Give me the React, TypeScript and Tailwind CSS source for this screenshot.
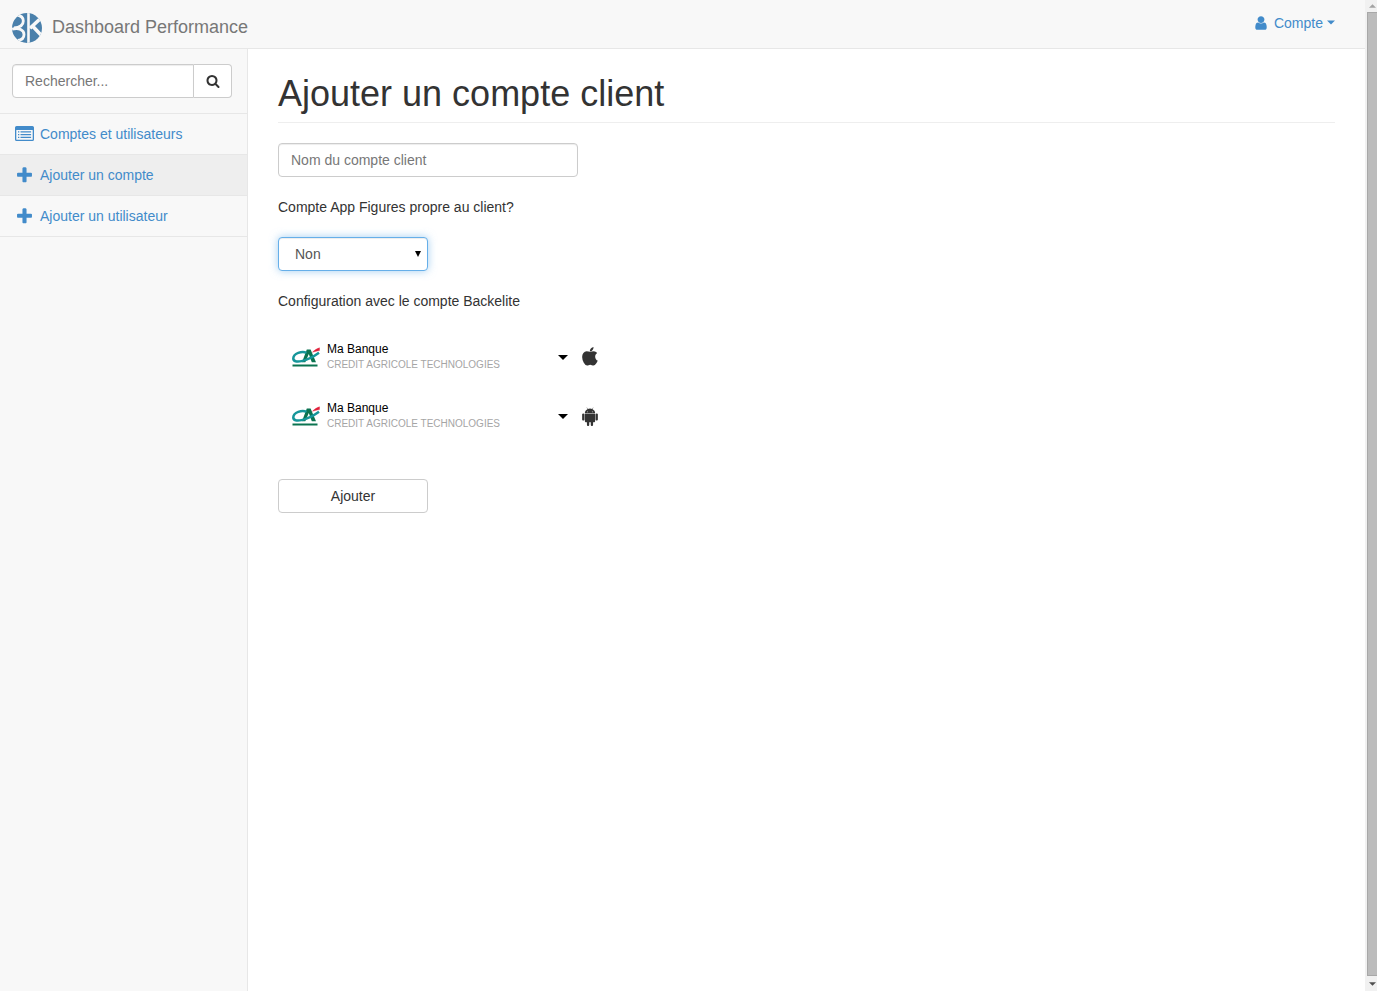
import React from 'react';

const FA = {
  user: 'M1536 1399q0 109-62.5 187t-150.5 78h-854q-88 0-150.5-78t-62.5-187q0-85 8.5-160.5t31.5-152 58.5-131 94-89 134.5-34.5q131 128 313 128t313-128q76 0 134.5 34.5t94 89 58.5 131 31.5 152 8.5 160.5zm-256-887q0 159-112.5 271.5t-271.5 112.5-271.5-112.5-112.5-271.5 112.5-271.5 271.5-112.5 271.5 112.5 112.5 271.5z',
  search:
    'M1216 832q0-185-131.5-316.5t-316.5-131.5-316.5 131.5-131.5 316.5 131.5 316.5 316.5 131.5 316.5-131.5 131.5-316.5zm512 832q0 52-38 90t-90 38q-54 0-90-38l-343-342q-179 124-399 124-143 0-273.5-55.5t-225-150-150-225-55.5-273.5 55.5-273.5 150-225 225-150 273.5-55.5 273.5 55.5 225 150 150 225 55.5 273.5q0 220-124 399l343 343q37 37 37 90z',
  plus: 'M1600 736v192q0 40-28 68t-68 28h-416v416q0 40-28 68t-68 28h-192q-40 0-68-28t-28-68v-416h-416q-40 0-68-28t-28-68v-192q0-40 28-68t68-28h416v-416q0-40 28-68t68-28h192q40 0 68 28t28 68v416h416q40 0 68 28t28 68z',
  apple:
    'M1585 1215q-39 125-123 250-129 196-257 196-49 0-140-32-86-32-151-32-61 0-142 33-81 34-132 34-152 0-301-259-147-261-147-503 0-228 113-374 113-144 284-144 72 0 177 30 104 30 138 30 45 0 143-34 102-34 173-34 119 0 213 65 52 36 104 100-79 67-114 118-65 94-65 207 0 124 69 223t158 126zm-376-1173q0 61-29 136-30 75-93 138-54 54-108 72-37 11-104 17 3-149 78-257 74-107 250-148 1 3 2.5 11t2.5 11q0 4 .5 10t.5 10z',
};

function Icon({ path, className }: { path: string; className: string }) {
  return (
    <svg viewBox="0 0 1792 1792" fill="currentColor" aria-hidden="true" className={className}>
      <path d={path} />
    </svg>
  );
}

function ListIcon() {
  return (
    <svg viewBox="0 0 19 16" fill="currentColor" aria-hidden="true" className="h-4 w-[19px]">
      <path fillRule="evenodd" d="M1.6 0h15.8A1.6 1.6 0 0 1 19 1.600v11.800a1.600 1.600 0 0 1-1.600 1.600H1.600A1.600 1.600 0 0 1 0 13.400V1.600A1.600 1.600 0 0 1 1.600 0zM1.300 4v9.200q0 .5.5.5h15.400q.5 0 .5-.5V4z" />
      <path d="M3 5.200h1.300v1.300H3zM5.500 5.200h10.600v1.300H5.500zM3 8h1.300v1.300H3zM5.500 8h10.600v1.300H5.500zM3 10.800h1.300v1.300H3zM5.500 10.800h10.600v1.300H5.500z" />
    </svg>
  );
}

function AndroidIcon() {
  return (
    <svg viewBox="-192 -1536 1792 1792" fill="currentColor" aria-hidden="true" className="size-5">
      <path
        transform="scale(1 -1)"
        d="M493 1053q16 0 27.5 -11.5t11.5 -27.5t-11.5 -27.5t-27.5 -11.5t-27 11.5t-11 27.5t11 27.5t27 11.5zM915 1053q16 0 27 -11.5t11 -27.5t-11 -27.5t-27 -11.5t-27.5 11.5t-11.5 27.5t11.5 27.5t27.5 11.5zM103 869q42 0 72 -30t30 -72v-430q0 -43 -29.5 -73t-72.5 -30t-73 30t-30 73v430q0 42 30 72t73 30zM1163 850v-666q0 -46 -32 -78t-77 -32h-75v-227q0 -43 -30 -73t-73 -30t-73 30t-30 73v227h-138v-227q0 -43 -30 -73t-73 -30q-42 0 -72 30t-30 73l-1 227h-74q-46 0 -78 32t-32 78v666h918zM931 1255q107 -55 171 -153.5t64 -215.5h-925q0 117 64 215.5t172 153.5l-71 131q-7 13 5 20q13 6 20 -6l72 -132q95 42 201 42t201 -42l72 132q7 12 20 6q12 -7 5 -20l-71 -131zM1408 767v-430q0 -43 -30 -73t-73 -30q-42 0 -72 30t-30 73v430q0 43 30 72.5t72 29.5q43 0 73 -29.5t30 -72.5z"
        fillRule="evenodd"
      />
    </svg>
  );
}

function BrandLogo() {
  return (
    <svg viewBox="0 0 30 30" aria-hidden="true" className="size-[30px]">
      <defs>
        <clipPath id="disc">
          <circle cx="15" cy="15" r="15" />
        </clipPath>
      </defs>
      <g clipPath="url(#disc)">
        <rect width="30" height="30" fill="#4a80ab" />
        <g fill="none" stroke="#f8f8f8">
          <path d="M16.500 0V30" strokeWidth="2.600" />
          <path d="M4.500 2C9 2.500 11.300 4.500 11.300 8C11.300 12 8 14.500 2 15" strokeWidth="2.800" />
          <path d="M0 16.200C7 14.200 12 17 12 21.500C12 25 9.500 27 6 27.500" strokeWidth="2.800" />
          <path d="M28.500 5.500L18 15.300M20.500 13L29.500 22.500" strokeWidth="3.600" />
        </g>
      </g>
    </svg>
  );
}

function BankLogo() {
  return (
    <svg viewBox="0 -1 28 20" aria-hidden="true" className="h-5 w-7">
      <path d="M10 14.300L14.800 1.500H18.600L24 14.300H19.800L16.800 6L13.300 14.300z" fill="#0b7350" />
      <path d="M14.500 4.800C10 2.500 1.500 5.500 1.300 10.300C1.200 16.500 15 13.500 27 4.800" fill="none" stroke="#16969a" strokeWidth="2.500" />
      <path d="M20.500 4.200C22.500 2.200 24.500 .8 27.500 -.2V2.500C25 2.900 23 3.600 20.500 4.200z" fill="#e1203a" stroke="#e1203a" strokeWidth=".4" />
      <path d="M.5 16.500H25.500V18.500H.5z" fill="#0b7350" />
    </svg>
  );
}

function Caret({ className }: { className: string }) {
  return (
    <svg viewBox="0 0 10 5" fill="currentColor" aria-hidden="true" className={className}>
      <path d="M0 0H10L5 5z" />
    </svg>
  );
}

const navItems = [
  { label: 'Comptes et utilisateurs', icon: <ListIcon />, active: false },
  { label: 'Ajouter un compte', icon: <Icon path={FA.plus} className="size-[19px]" />, active: true },
  { label: 'Ajouter un utilisateur', icon: <Icon path={FA.plus} className="size-[19px]" />, active: false },
];

const apps = [
  { store: 'iOS', icon: <Icon path={FA.apple} className="size-5" /> },
  { store: 'Android', icon: <AndroidIcon /> },
];

export default function App() {
  return (
    <div className="flex min-h-screen bg-white font-['Liberation_Sans',Arial,sans-serif] text-sm leading-5 text-[#333]">
      <div className="flex min-w-0 flex-1 flex-col">
        <header className="flex h-[49px] items-center justify-between border-b border-[#e7e7e7] bg-[#f8f8f8] pr-[30px] pl-3">
          <a href="#" className="flex items-center gap-[10px] pt-[7px] text-lg text-[#777]">
            <BrandLogo />
            <span className="pb-px leading-6">Dashboard Performance</span>
          </a>
          <button type="button" className="flex items-center pb-[3px] text-[#428bca]">
            <Icon path={FA.user} className="size-4" />
            <span className="ml-[5px]">Compte</span>
            <Caret className="ml-1 h-[5px] w-2" />
          </button>
        </header>

        <div className="flex flex-1">
          <aside className="w-[248px] shrink-0 border-r border-[#e7e7e7] bg-[#f8f8f8]">
            <form className="flex border-b border-[#e7e7e7] py-[15px] pr-[15px] pl-3">
              <input
                type="text"
                aria-label="Rechercher"
                placeholder="Rechercher..."
                className="h-[34px] min-w-0 flex-1 rounded-l border border-[#ccc] bg-white px-3 shadow-[inset_0_1px_1px_rgba(0,0,0,0.075)] outline-none placeholder:text-[#777]"
              />
              <button
                type="button"
                aria-label="Lancer la recherche"
                className="flex h-[34px] w-[38px] items-center justify-center rounded-r border border-l-0 border-[#ccc] bg-white"
              >
                <Icon path={FA.search} className="size-[14px]" />
              </button>
            </form>
            <nav>
              {navItems.map((item) => (
                <a
                  key={item.label}
                  href="#"
                  className={`flex h-[41px] items-center border-b border-[#e7e7e7] pl-[15px] text-[#428bca] ${item.active ? 'bg-[#eee]' : ''}`}
                >
                  <span className="flex w-[25px]">{item.icon}</span>
                  {item.label}
                </a>
              ))}
            </nav>
          </aside>

          <main className="min-w-0 flex-1 px-[30px] pt-[25px]">
            <h1 className="border-b border-[#eee] pb-2 text-4xl leading-10">Ajouter un compte client</h1>
            <form className="flex flex-col items-start gap-5 pt-5">
              <input
                type="text"
                aria-label="Nom du compte client"
                placeholder="Nom du compte client"
                className="h-[34px] w-[300px] rounded border border-[#ccc] px-3 shadow-[inset_0_1px_1px_rgba(0,0,0,0.075)] outline-none placeholder:text-[#777]"
              />
              <label htmlFor="own-account">Compte App Figures propre au client?</label>
              <div className="relative w-[150px]">
                <select
                  id="own-account"
                  defaultValue="non"
                  className="block h-[34px] w-full appearance-none rounded border border-[#66afe9] bg-white px-4 text-[#555] shadow-[inset_0_1px_1px_rgba(0,0,0,0.075),0_0_8px_rgba(102,175,233,0.6)] outline-none"
                >
                  <option value="non">Non</option>
                  <option value="oui">Oui</option>
                </select>
                <svg viewBox="0 0 6 6" aria-hidden="true" className="pointer-events-none absolute top-[14px] right-[7px] size-[6px]">
                  <path d="M0 0H6L3 6z" fill="#000" />
                </svg>
              </div>
              <p>Configuration avec le compte Backelite</p>
              <div className="mb-[10px]">
                {apps.map((app) => (
                  <div key={app.store} className="flex h-[59px] items-center pb-2">
                    <button type="button" className="flex w-[290px] items-center pl-[14px] text-left">
                      <BankLogo />
                      <span className="ml-[7px] flex flex-1 flex-col">
                        <span className="text-xs leading-4 text-black">Ma Banque</span>
                        <span className="text-[10px] leading-4 text-[#a5a5a5]">CREDIT AGRICOLE TECHNOLOGIES</span>
                      </span>
                      <Caret className="mt-px h-[5px] w-[10px] text-black" />
                    </button>
                    <span role="img" aria-label={app.store} className="ml-3">
                      {app.icon}
                    </span>
                  </div>
                ))}
              </div>
              <button type="button" className="h-[34px] w-[150px] rounded border border-[#ccc] bg-white">
                Ajouter
              </button>
            </form>
          </main>
        </div>
      </div>

      <div aria-hidden="true" className="flex w-3 shrink-0 flex-col items-end bg-[#f1f1f1]">
        <div className="flex h-3 w-[10px] items-center justify-center">
          <Caret className="h-1 w-[7px] rotate-180 text-[#a3a3a3]" />
        </div>
        <div className="w-[10px] flex-1 border border-r-0 border-[#a8a8a8] bg-[#bcbcbc]" />
        <div className="flex h-[15px] w-[10px] items-center justify-center">
          <Caret className="h-1 w-[7px] text-[#505050]" />
        </div>
      </div>
    </div>
  );
}
